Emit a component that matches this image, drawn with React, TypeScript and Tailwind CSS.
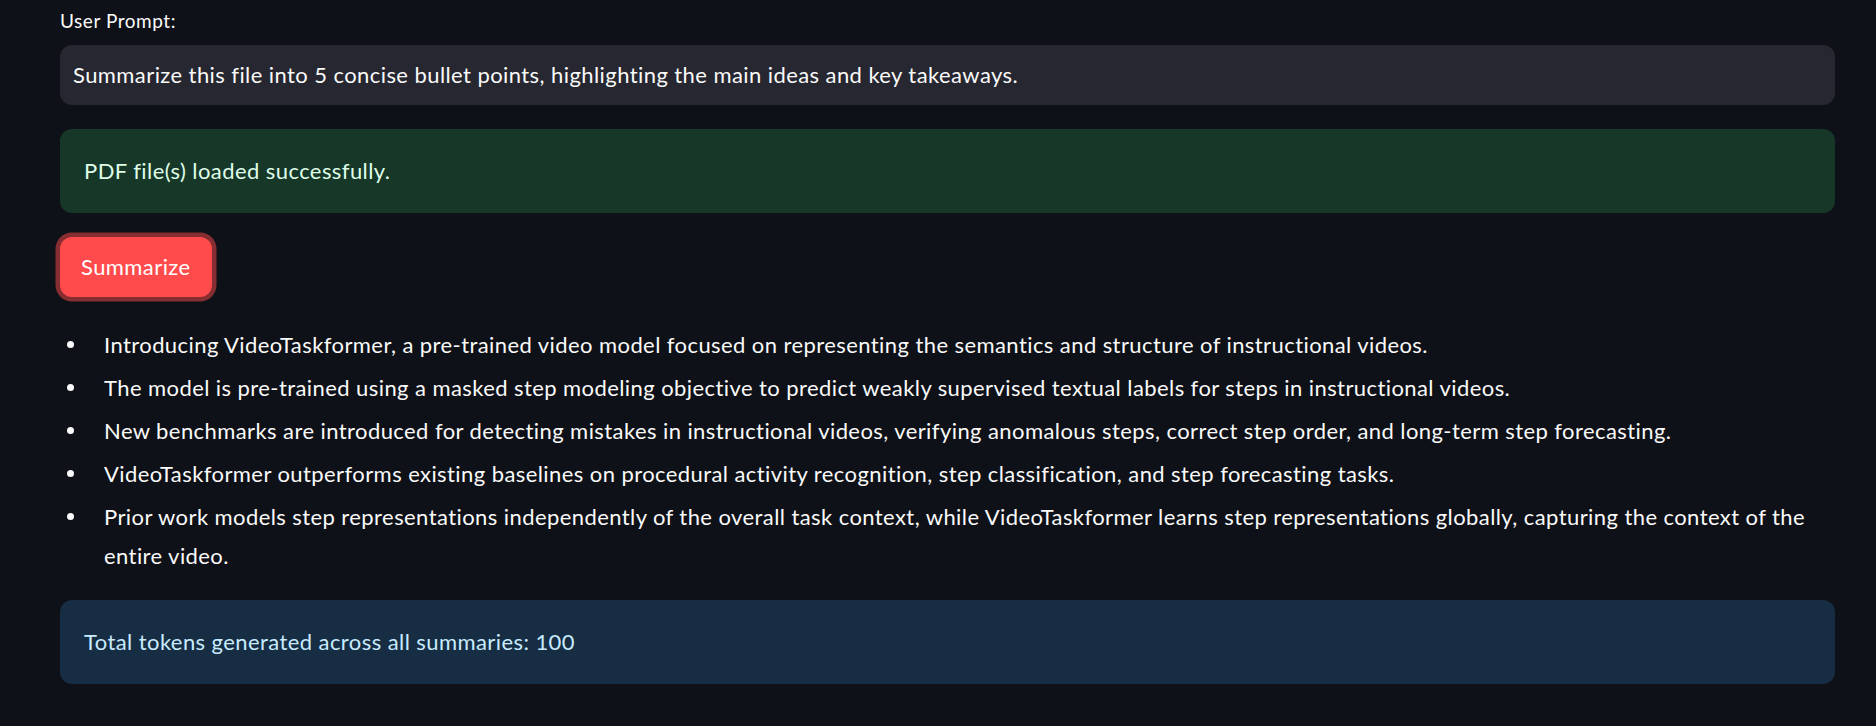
import React from 'react';

const BULLETS = [
  'Introducing VideoTaskformer, a pre-trained video model focused on representing the semantics and structure of instructional videos.',
  'The model is pre-trained using a masked step modeling objective to predict weakly supervised textual labels for steps in instructional videos.',
  'New benchmarks are introduced for detecting mistakes in instructional videos, verifying anomalous steps, correct step order, and long-term step forecasting.',
  'VideoTaskformer outperforms existing baselines on procedural activity recognition, step classification, and step forecasting tasks.',
  'Prior work models step representations independently of the overall task context, while VideoTaskformer learns step representations globally, capturing the context of the entire video.',
];

export default function App() {
  return (
    <div className="min-h-screen w-full bg-[#0e1117] text-[#fafafa] font-['Lato','Noto_Sans',sans-serif] tracking-[0.42px]">
      <div className="w-[1835px] pl-[60px] flex flex-col">
        {/* prompt */}
        <div className="h-[45px] pt-[10px]">
          <label className="block text-[19px] leading-[1.2] tracking-[0.55px]">User Prompt:</label>
        </div>
        <div className="h-[60px] rounded-xl bg-[#262730] px-[13px] flex items-center text-[22px] leading-[1.2]">
          Summarize this file into 5 concise bullet points, highlighting the main ideas and key takeaways.
        </div>

        {/* status */}
        <div className="mt-6 h-[84px] rounded-xl bg-[#173828] px-[24px] flex items-center text-[22px] leading-[1.2] text-[#dffde9]">
          PDF file(s) loaded successfully.
        </div>

        <div className="mt-6">
          <button className="h-[60px] px-[21px] rounded-xl bg-[#ff4b4b] text-white text-[22px] leading-[1.2] shadow-[0_0_0_4.5px_#862e31]">
            Summarize
          </button>
        </div>

        {/* summary */}
        <ul className="mt-[28px] flex flex-col text-[22px] leading-[39px]">
          {BULLETS.map((b) => (
            <li key={b} className="flex mb-[4px]">
              <span className="w-[44px] h-[39px] shrink-0 flex items-center">
                <span className="ml-[7px] w-[7px] h-[7px] rounded-full bg-[#fafafa]" />
              </span>
              <span className="flex-1">{b}</span>
            </li>
          ))}
        </ul>

        <div className="mt-[21px] h-[84px] rounded-xl bg-[#172d43] px-[24px] flex items-center text-[22px] leading-[1.2] text-[#c7ebff]">
          Total tokens generated across all summaries: 100
        </div>
      </div>
    </div>
  );
}
